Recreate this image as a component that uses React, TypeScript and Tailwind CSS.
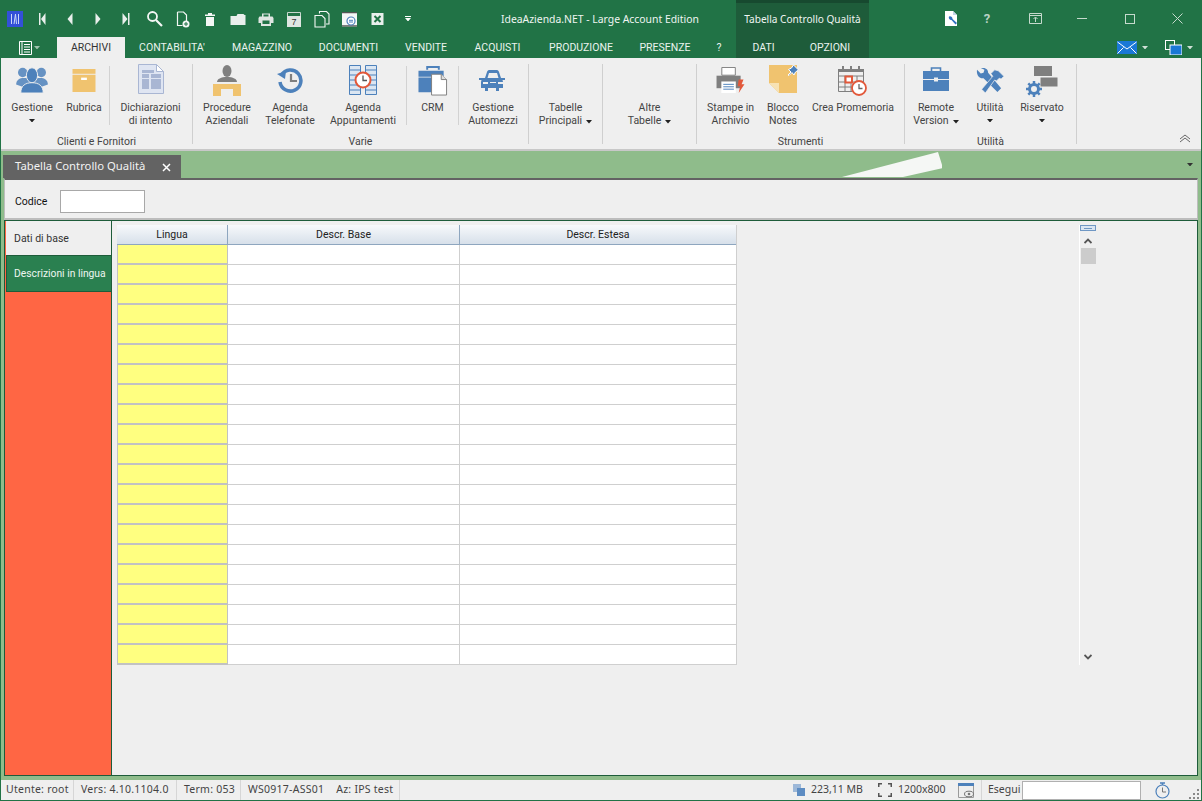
import type { ReactNode } from 'react'

const BLUE = '#4d81bb'
const TAN = '#f0c36f'
const GREY = '#7f7f7f'
const RED = '#e2583a'

function Caret({ color = '#222' }: { color?: string }) {
  return (
    <svg width="6" height="3.500" viewBox="0 0 7 4" className="inline-block">
      <path d="M0 0h7L3.500 4z" fill={color} />
    </svg>
  )
}

/* ---- title bar icons ---- */
const titleIcons: ReactNode[] = [
  <path key="a" d="M6 3h1.500v12H6zM12.500 3v12L8 9z" fill="#e9efec" />,
  <path key="b" d="M11.500 3v12L6.500 9z" fill="#e9efec" />,
  <path key="c" d="M6.500 3v12l5-6z" fill="#e9efec" />,
  <path key="d" d="M5.500 3v12l5-6zM11 3h1.500v12H11z" fill="#e9efec" />,
  <g key="e" fill="none" stroke="#f4f7f5">
    <circle cx="7.500" cy="6.500" r="4.500" strokeWidth="1.800" />
    <path d="M11 10l6 6" strokeWidth="2.200" />
  </g>,
  <g key="f">
    <path d="M4.500 2h6l3 3v6M4.500 2v13.500h5" fill="none" stroke="#f4f7f5" strokeWidth="1.200" />
    <circle cx="13" cy="14" r="3.500" fill="#f4f7f5" />
    <path d="M11 14h4M13 12v4" stroke="#217346" strokeWidth="1" />
  </g>,
  <path key="g" d="M4 4.500h10v1.500H4zM7 3h4v1.500H7zM5 7h8v9H5z" fill="#f4f7f5" />,
  <path key="h" d="M1.500 6h6l1-2h6l1 1h1v10H1.500z" fill="#e9efec" />,
  <g key="i">
    <path d="M5 3.500h8v3h2.500l1 1.500v5H14v3H4v-3H1.500V8l1-1.500H5z" fill="#dfe6e2" />
    <path d="M5.500 10.500h7v3.500h-7zM6.500 4.500h5v2h-5z" fill="#217346" />
  </g>,
  <g key="j">
    <path d="M2.500 2.500h13v14h-13z" fill="none" stroke="#c9d8cf" />
    <path d="M2 6h14v11H2z" fill="#dfe6e2" />
    <text x="9" y="15" fontSize="9" textAnchor="middle" fill="#333" fontFamily="Liberation Sans">7</text>
  </g>,
  <g key="k" fill="none" stroke="#f4f7f5" strokeWidth="1.100">
    <path d="M6.500 3.500V1.500h7l2.500 2.500v10h-3" />
    <path d="M2 5.500h7l3 3V17H2z" />
  </g>,
  <g key="l">
    <path d="M1 2h15v14.500H1z" fill="#f4f7f5" />
    <path d="M1 2h15v1.200H1zM1 15.300h15v1.200H1z" fill="#555" />
    <circle cx="10" cy="11" r="4" fill="#fff" stroke="#4d81bb" strokeWidth="1.200" />
    <path d="M8 10.300h4M8 12h4" stroke="#4d81bb" />
  </g>,
  <g key="m">
    <path d="M2.500 3h12v12h-12z" fill="#e9efec" />
    <path d="M5.500 6l6 6M11.500 6l-6 6" stroke="#217346" strokeWidth="2" />
  </g>,
]

function LogoIcon() {
  return (
    <svg width="16" height="16" viewBox="0 0 16 16">
      <rect width="16" height="16" fill="#3350d8" />
      <path d="M4.500 3v10M8.500 3L7 13M8.500 3l1 10M11.500 3v10" stroke="#cdd8f7" strokeWidth="1" fill="none" />
    </svg>
  )
}

function WindowIcons() {
  return (
    <div className="flex h-[37px] items-center">
      <div className="flex w-[36px] justify-center">
        <svg width="14" height="17" viewBox="0 0 14 17">
          <path d="M1 1h8l4 4v11H1z" fill="#fff" />
          <path d="M9 1v4h4" fill="#c4d3e8" />
          <path d="M5 6.500a2.500 2.500 0 0 0 2.500 3.500l4 4.500 1.500-1.500-4.500-4A2.500 2.500 0 0 0 5 6.500z" fill="#2f6fc0" />
        </svg>
      </div>
      <div className="flex w-[36px] justify-center text-[13px] font-bold text-[#b9d2c4]">?</div>
      <div className="ml-[12px] flex w-[36px] justify-center">
        <svg width="13" height="11" viewBox="0 0 13 11" fill="none" stroke="#c6dacd">
          <path d="M.500.500h12v10H.500zM.500 2.500h12M6.500 9V4.500M4.500 6l2-2 2 2" />
        </svg>
      </div>
      <div className="ml-[5px] flex w-[48px] justify-center">
        <div className="h-px w-[10px] bg-[#c6dacd]" />
      </div>
      <div className="flex w-[48px] justify-center">
        <div className="h-[10px] w-[10px] border border-[#c6dacd]" />
      </div>
      <div className="flex w-[47px] justify-center">
        <svg width="11" height="11" viewBox="0 0 11 11" stroke="#c6dacd">
          <path d="M.500.500l10 10M10.500.500l-10 10" />
        </svg>
      </div>
    </div>
  )
}

function Tab({ label, w, active }: { label: string; w: number; active?: boolean }) {
  return (
    <div
      className={`flex h-[21px] shrink-0 items-center justify-center whitespace-nowrap text-[10.500px] ${active ? 'bg-[#efefef] text-[#333]' : 'text-[#eaf3ee]'}`}
      style={{ width: w }}
    >
      {label}
    </div>
  )
}

/* ---- ribbon icons ---- */
function PeopleIcon() {
  return (
    <svg width="34" height="28" viewBox="0 0 34 30" className="mt-[7px]">
      <g fill={BLUE}>
        <circle cx="7" cy="8" r="5" opacity="0.85" />
        <circle cx="27" cy="8" r="5" opacity="0.85" />
        <path d="M0 21c0-5 4-7 8-7h18c4 0 8 2 8 7l-6 2H6z" opacity="0.85" />
        <ellipse cx="17" cy="11" rx="6" ry="8" stroke="#efefef" />
        <path d="M5 30c0-8 5-11 12-11s12 3 12 11z" stroke="#efefef" />
      </g>
    </svg>
  )
}

function BoxIcon() {
  return (
    <svg width="26" height="23" viewBox="0 0 26 24" className="mt-[11px]">
      <path d="M1 0h24v5H1z" fill={TAN} />
      <path d="M1 6h24v18H1z" fill={TAN} />
      <path d="M10 9h6v2.500h-6z" fill="#fff" />
    </svg>
  )
}

function DocIcon() {
  return (
    <svg width="26" height="30" viewBox="0 0 26 30" className="mt-[6px]">
      <path d="M.500.500h18l7 7v22H.500z" fill="#dfe5f2" stroke="#a9b6d3" />
      <path d="M18.500.500v7h7z" fill="#fff" stroke="#a9b6d3" />
      <path d="M4 6h12v3H4zM4 10h7v4H4zM13 10h10v4H13zM4 15h7v10H4zM13 15h10v10H13z" fill="#a9b6d3" />
    </svg>
  )
}

function DeskIcon() {
  return (
    <svg width="29" height="32" viewBox="0 0 29 32" className="mt-[6px]">
      <ellipse cx="14" cy="7" rx="4.500" ry="6" fill={GREY} />
      <path d="M4 18c0-3 4-5 10-5s10 2 10 5z" fill={GREY} />
      <path d="M0 20h28v12h-8v-7H8v7H0z" fill={TAN} />
    </svg>
  )
}

function HistoryIcon() {
  return (
    <svg width="26" height="26" viewBox="0 0 26 26" className="mt-[9px]">
      <path d="M4.500 8A10.500 10.500 0 1 1 3 15" fill="none" stroke={BLUE} strokeWidth="3.500" />
      <path d="M0 7l8 5 1-8z" fill={BLUE} />
      <path d="M14 7v7h6" fill="none" stroke={GREY} strokeWidth="2.200" />
    </svg>
  )
}

function ScheduleIcon() {
  return (
    <svg width="28" height="30" viewBox="0 0 28 30" className="mt-[7px]">
      <path d="M.500.500h11v29H.500zM16.500.500h11v29h-11z" fill="#dbe6f2" stroke={BLUE} />
      <path d="M1 5h10M1 10h10M1 15h10M1 20h10M1 25h10M17 5h10M17 10h10M17 15h10M17 20h10M17 25h10" stroke={BLUE} />
      <circle cx="14" cy="15" r="7.500" fill="#fff" stroke={RED} strokeWidth="2" />
      <path d="M14 10.500V15.500h4" fill="none" stroke="#555" strokeWidth="1.300" />
    </svg>
  )
}

function CaseDocIcon() {
  return (
    <svg width="30" height="30" viewBox="0 0 30 31" className="mt-[8px]">
      <path d="M9 4V1h12v3" fill="none" stroke={BLUE} strokeWidth="2" />
      <path d="M0 5h26v6H0zM0 12h26v15H0z" fill={BLUE} />
      <path d="M13.500 8.500h10l5.500 5.500v16H13.500z" fill="#fff" stroke={GREY} />
      <path d="M23.500 8.500V14H29" fill="#ddd" stroke={GREY} />
    </svg>
  )
}

function CarIcon() {
  return (
    <svg width="28" height="21" viewBox="0 0 28 21" className="mt-[12px]">
      <path d="M6 8l2-6c.300-1 1-2 2-2h8c1 0 1.700 1 2 2l2 6 4 0v2h-2.500l.500 2v6h-4v3h-3v-3H9v3H6v-3H2v-6l.500-2H0V8z" fill={BLUE} />
      <path d="M8.500 8l1.500-5h8l1.500 5z" fill="#efefef" />
      <path d="M4 12h5v2H4zM19 12h5v2h-5zM11 12h6v1h-6z" fill="#efefef" />
    </svg>
  )
}

function PrinterIcon() {
  return (
    <svg width="29" height="27" viewBox="0 0 29 28" className="mt-[9px]">
      <path d="M5.500.500h14v8h-14z" fill="#fff" stroke={GREY} />
      <path d="M0 9h25v13H0z" fill={GREY} />
      <path d="M5 15h15v12H5z" fill="#fff" />
      <path d="M7 18h11M7 20.500h11M7 23h11" stroke={BLUE} />
      <path d="M23 13h5l-2 5h3l-6 9 1.500-7H22z" fill={RED} />
    </svg>
  )
}

function NoteIcon() {
  return (
    <svg width="34" height="32" viewBox="0 0 34 32" className="mt-[4px]">
      <path d="M3 3h28v28H13L3 21z" fill={TAN} />
      <path d="M3 21h10v10z" fill="#f7e2b4" />
      <path d="M22 13l3-3-2.500-2.500 3-1.500 2-3 5 5-3 2-1.500 3L26 10.500l-3 3z" fill={BLUE} stroke="#fff" strokeWidth="1" />
    </svg>
  )
}

function CalendarIcon() {
  return (
    <svg width="30" height="30" viewBox="0 0 30 30" className="mt-[8px]">
      <path d="M.500 3.500h25v22h-25zM.500 10h25M.500 16h25M.500 21h25M7 10v16M13 10v16M19 10v16" fill="none" stroke={GREY} />
      <path d="M0 3h26v3H0zM4 0h2v4H4zM12 0h2v4h-2zM20 0h2v4h-2z" fill={GREY} />
      <path d="M7.500 10.500h6.500v6H7.500z" fill="#fff" stroke={RED} strokeWidth="2" />
      <circle cx="21" cy="22" r="7" fill="#fff" stroke={RED} strokeWidth="1.800" />
      <path d="M21 18v4.500h3.500" fill="none" stroke="#666" strokeWidth="1.300" />
    </svg>
  )
}

function BriefcaseIcon() {
  return (
    <svg width="26" height="24" viewBox="0 0 26 24" className="mt-[9px]">
      <path d="M8.500 4V1h9v3" fill="none" stroke={BLUE} strokeWidth="1.600" />
      <path d="M0 4h26v8H15v-1.500h-4V12H0zM0 13h11v1.500h4V13h11v11H0z" fill={BLUE} />
    </svg>
  )
}

function ToolsIcon() {
  return (
    <svg width="30" height="25" viewBox="0 0 30 27" className="mt-[10px]">
      <path d="M1 2l4 4 3-1 1-3-4-2c4-1 8 1 8 5l14 17-4 4L8 11C4 12 0 8 1 2z" fill={BLUE} />
      <path d="M6 23L18 9l-2-3 4-4 4 1 6 6-3 3-2-1-3 3-2-1L10 27z" fill={BLUE} stroke="#efefef" strokeWidth="0.800" />
    </svg>
  )
}

function ReservedIcon() {
  return (
    <svg width="32" height="31" viewBox="0 0 32 31" className="mt-[8px]">
      <path d="M8 0h18v10H8z" fill={GREY} />
      <path d="M14 11h18v10H14z" fill={GREY} stroke="#efefef" />
      <g transform="translate(8 23)">
        <circle r="4.500" fill="none" stroke={BLUE} strokeWidth="3" />
        <path d="M0-8v3M0 5v3M-8 0h3M5 0h3M-5.700-5.700l2 2M3.700 3.700l2 2M5.700-5.700l-2 2M-3.700 3.700l-2 2" stroke={BLUE} strokeWidth="2.500" />
      </g>
    </svg>
  )
}

/* ---- ribbon parts ---- */
function RibbonButton({ w, icon, lines, caret }: { w: number; icon?: ReactNode; lines: string[]; caret?: 'below' | 'inline' }) {
  return (
    <div className="flex flex-col items-center text-[10.500px] leading-[13px] text-[#444]" style={{ width: w }}>
      <div className="flex h-[43px] items-start justify-center">{icon}</div>
      {lines.map((line, i) => (
        <div key={line} className="whitespace-nowrap">
          {line}
          {caret === 'inline' && i === lines.length - 1 && (
            <span className="ml-[4px] align-middle">
              <Caret />
            </span>
          )}
        </div>
      ))}
      {caret === 'below' && (
        <div className="flex h-[13px] items-center">
          <Caret />
        </div>
      )}
    </div>
  )
}

function SmallSep() {
  return <div className="mt-[8px] h-[59px] w-px shrink-0 bg-[#d2d2d2]" />
}

function Group({ w, label, children }: { w: number; label?: string; children: ReactNode }) {
  return (
    <div className="flex h-[90px] shrink-0 flex-col" style={{ width: w }}>
      <div className="flex h-[77px] shrink-0">{children}</div>
      <div className="h-[13px] text-center text-[10.500px] leading-[14px] text-[#444]">{label}</div>
    </div>
  )
}

function GroupSep() {
  return <div className="mt-[6px] h-[80px] w-px shrink-0 bg-[#cfcfcf]" />
}

function StatusCell({ children, w }: { children: ReactNode; w: number }) {
  return (
    <div className="flex h-full items-center whitespace-nowrap border-r border-[#d6d6d6] tracking-[0.25px]" style={{ width: w }}>
      {children}
    </div>
  )
}

const rows = Array.from({ length: 21 }, (_, i) => i)

export default function App() {
  return (
    <div className="flex h-[801px] w-[1202px] flex-col overflow-hidden bg-[#217346] px-px pb-px font-['Roboto',sans-serif]">
      {/* title bar + ribbon tabs */}
      <div className="flex h-[58px] shrink-0">
        <div className="flex w-[735px] shrink-0 flex-col">
          <div className="flex h-[37px] items-center">
            <div className="flex w-[27px] shrink-0 justify-center">
              <LogoIcon />
            </div>
            {titleIcons.map((icon, i) => (
              <div key={i} className="flex w-[28px] shrink-0 justify-center">
                <svg width="18" height="18" viewBox="0 0 18 18">
                  {icon}
                </svg>
              </div>
            ))}
            <div className="ml-[12px] flex w-[8px] flex-col items-center gap-[1px]">
              <div className="h-px w-[6px] bg-white" />
              <Caret color="#fff" />
            </div>
            <div className="ml-[89px] mt-[2px] whitespace-nowrap font-['Noto_Sans',sans-serif] text-[10.400px] text-[#f0f5f2]">IdeaAzienda.NET - Large Account Edition</div>
          </div>
          <div className="flex h-[21px]">
            <div className="flex w-[56px] shrink-0 items-center pl-[18px]">
              <svg width="13" height="14" viewBox="0 0 13 14" fill="none" stroke="#fff">
                <path d="M.500.500h12v13H.500zM3 1v12" />
                <path d="M5 3.500h6M5 6h6M5 8.500h6M5 11h6" />
              </svg>
              <span className="ml-[2px] flex">
                <Caret color="#9fc2ae" />
              </span>
            </div>
            <Tab w={68} label="ARCHIVI" active />
            <Tab w={94} label="CONTABILITA'" />
            <Tab w={86} label="MAGAZZINO" />
            <Tab w={87} label="DOCUMENTI" />
            <Tab w={68} label="VENDITE" />
            <Tab w={75} label="ACQUISTI" />
            <Tab w={92} label="PRODUZIONE" />
            <Tab w={76} label="PRESENZE" />
            <Tab w={32} label="?" />
          </div>
        </div>
        <div className="flex w-[133px] shrink-0 flex-col border-t-[3px] border-[#17492f] bg-[#1e5c3a]">
          <div className="flex h-[34px] items-center justify-center whitespace-nowrap font-['Noto_Sans',sans-serif] text-[10.100px] text-[#f0f5f2]">Tabella Controllo Qualità</div>
          <div className="flex h-[21px]">
            <Tab w={55} label="DATI" />
            <Tab w={78} label="OPZIONI" />
          </div>
        </div>
        <div className="flex min-w-0 flex-1 flex-col">
          <div className="pl-[64px]">
            <WindowIcons />
          </div>
          <div className="flex h-[21px] items-center justify-end gap-[17px] pr-[8px]">
            <div className="flex items-center gap-[5px]">
              <svg width="20" height="13" viewBox="0 0 20 13">
                <rect width="20" height="13" fill="#1a78d6" />
                <path d="M.500 1L10 8l9.500-7M.500 12.500l6-6M19.500 12.500l-6-6" fill="none" stroke="#fff" />
              </svg>
              <Caret color="#cfe0d6" />
            </div>
            <div className="flex items-center gap-[5px]">
              <svg width="17" height="15" viewBox="0 0 17 15">
                <rect x="0.500" y="0.500" width="9" height="9" fill="#217346" stroke="#fff" />
                <rect x="5" y="5" width="12" height="10" fill="#1a78d6" stroke="#fff" />
              </svg>
              <Caret color="#cfe0d6" />
            </div>
          </div>
        </div>
      </div>

      {/* ribbon */}
      <div className="flex h-[93px] shrink-0 border-b-[2px] border-[#c8c8c8] bg-[#efefef]">
        <Group w={191} label="Clienti e Fornitori">
          <div className="w-[4px]" />
          <RibbonButton w={54} icon={<PeopleIcon />} lines={['Gestione']} caret="below" />
          <RibbonButton w={50} icon={<BoxIcon />} lines={['Rubrica']} />
          <SmallSep />
          <RibbonButton w={81} icon={<DocIcon />} lines={['Dichiarazioni', 'di intento']} />
        </Group>
        <GroupSep />
        <Group w={335} label="Varie">
          <div className="w-[4px]" />
          <RibbonButton w={60} icon={<DeskIcon />} lines={['Procedure', 'Aziendali']} />
          <RibbonButton w={66} icon={<HistoryIcon />} lines={['Agenda', 'Telefonate']} />
          <RibbonButton w={80} icon={<ScheduleIcon />} lines={['Agenda', 'Appuntamenti']} />
          <div className="w-[3px]" />
          <SmallSep />
          <RibbonButton w={51} icon={<CaseDocIcon />} lines={['CRM']} />
          <SmallSep />
          <RibbonButton w={68} icon={<CarIcon />} lines={['Gestione', 'Automezzi']} />
        </Group>
        <GroupSep />
        <Group w={73}>
          <RibbonButton w={73} lines={['Tabelle', 'Principali']} caret="inline" />
        </Group>
        <GroupSep />
        <Group w={93}>
          <RibbonButton w={93} lines={['Altre', 'Tabelle']} caret="inline" />
        </Group>
        <GroupSep />
        <Group w={207} label="Strumenti">
          <RibbonButton w={67} icon={<PrinterIcon />} lines={['Stampe in', 'Archivio']} />
          <RibbonButton w={38} icon={<NoteIcon />} lines={['Blocco', 'Notes']} />
          <RibbonButton w={102} icon={<CalendarIcon />} lines={['Crea Promemoria']} />
        </Group>
        <GroupSep />
        <Group w={171} label="Utilità">
          <RibbonButton w={62} icon={<BriefcaseIcon />} lines={['Remote', 'Version']} caret="inline" />
          <RibbonButton w={46} icon={<ToolsIcon />} lines={['Utilità']} caret="below" />
          <RibbonButton w={58} icon={<ReservedIcon />} lines={['Riservato']} caret="below" />
        </Group>
        <GroupSep />
        <div className="flex flex-1 items-end justify-end pb-[6px] pr-[10px]">
          <svg width="12" height="9" viewBox="0 0 12 9" fill="none" stroke="#666">
            <path d="M1 5l5-4 5 4M1 8l5-4 5 4" />
          </svg>
        </div>
      </div>

      {/* document tab strip */}
      <div className="relative flex h-[27px] shrink-0 items-end bg-[#8fbc8b] pl-[2px]">
        <div className="flex h-[23px] w-[178px] items-center bg-[#636363] pl-[12px] font-['Noto_Sans',sans-serif] text-[11.300px] text-[#f2f2f2]">
          <span className="whitespace-nowrap">Tabella Controllo Qualità</span>
          <svg width="9" height="9" viewBox="0 0 9 9" className="ml-[17px] mt-px" stroke="#fff" strokeWidth="1.500">
            <path d="M1 1l7 7M8 1L1 8" />
          </svg>
        </div>
        <svg width="100" height="26" viewBox="0 0 100 26" className="absolute left-[841px] top-0">
          <path d="M0 26L96 1l5 16-40 9z" fill="#f5f7f5" />
        </svg>
        <div className="ml-auto flex h-full items-center pr-[8px]">
          <Caret color="#333" />
        </div>
      </div>

      {/* form panel */}
      <div className="flex min-h-0 flex-1 flex-col bg-[#8fbc8b] px-[3px]">
        <div className="flex h-[42px] shrink-0 items-center border-x border-b-2 border-t-2 border-[#bdbdbd] border-t-[#636363] bg-[#efefef] pl-[10px] pt-[5px]">
          <span className="w-[45px] text-[10.500px] text-[#111]">Codice</span>
          <div className="h-[23px] w-[85px] border border-[#a8a8a8] bg-white" />
        </div>
        <div className="flex min-h-0 flex-1 border border-[#1e5c3a] bg-[#efefef]">
          <div className="flex w-[107px] shrink-0 flex-col border-r border-[#1e5c3a] bg-[#ff6644] pl-px">
            <div className="flex h-[34px] items-center bg-[#efefef] pl-[8px] pt-[2px] text-[10.500px] text-[#333]">Dati di base</div>
            <div className="flex h-[37px] items-center whitespace-nowrap border border-r-0 border-[#1e5c3a] bg-[#2a8050] pl-[7px] pt-px text-[10.300px] text-[#eef6f1]">
              Descrizioni in lingua
            </div>
          </div>
          <div className="flex flex-1 items-start justify-between pl-[5px] pr-[101px] pt-[4px]">
            <div className="grid grid-cols-[111px_232px_276px] border-r border-[#cfcfcf] text-[10.500px] text-[#222]">
              <div className="flex h-[20px] items-center justify-center border-b border-r border-[#8ea6bf] bg-linear-to-b from-[#f7f9fb] to-[#d7e0ea]">Lingua</div>
              <div className="flex h-[20px] items-center justify-center border-b border-r border-[#8ea6bf] bg-linear-to-b from-[#f7f9fb] to-[#d7e0ea]">Descr. Base</div>
              <div className="flex h-[20px] items-center justify-center border-b border-[#8ea6bf] bg-linear-to-b from-[#f7f9fb] to-[#d7e0ea]">Descr. Estesa</div>
              {rows.map((r) => (
                <div key={r} className="contents">
                  <div className="h-[20px] border-x border-b-2 border-[#c2c2c2] bg-[#ffff80]" />
                  <div className="h-[20px] border-b border-r border-[#cfcfcf] bg-white" />
                  <div className="h-[20px] border-b border-[#cfcfcf] bg-white" />
                </div>
              ))}
            </div>
            <div className="flex h-[440px] w-[17px] flex-col items-center border-l border-white">
              <div className="flex h-[6px] w-[16px] items-center justify-center border border-[#6f97c4] bg-[#d9e5f2]">
                <div className="h-px w-[8px] bg-[#6f97c4]" />
              </div>
              <svg width="8" height="6" viewBox="0 0 8 6" className="mt-[7px]" fill="none" stroke="#555" strokeWidth="1.800">
                <path d="M.500 5L4 1.500 7.500 5" />
              </svg>
              <div className="mt-[4px] h-[16px] w-[15px] bg-[#cccccc]" />
              <svg width="8" height="6" viewBox="0 0 8 6" className="mb-[5px] mt-auto" fill="none" stroke="#555" strokeWidth="1.800">
                <path d="M.500 1L4 4.500 7.500 1" />
              </svg>
            </div>
          </div>
        </div>
        <div className="h-[4px] shrink-0" />
      </div>

      {/* status bar */}
      <div className="flex h-[20px] shrink-0 items-center bg-[#efefef] font-['Noto_Sans',sans-serif] text-[10.500px] text-[#444]">
        <StatusCell w={73}>
          <span className="pl-[5px]">Utente: root</span>
        </StatusCell>
        <StatusCell w={103}>
          <span className="pl-[7px]">Vers: 4.10.1104.0</span>
        </StatusCell>
        <StatusCell w={64}>
          <span className="pl-[7px]">Term: 053</span>
        </StatusCell>
        <StatusCell w={159}>
          <span className="pl-[7px]">WS0917-ASS01</span>
          <span className="pl-[12px]">Az: IPS test</span>
        </StatusCell>
        <div className="ml-auto flex h-full items-center">
          <svg width="12" height="12" viewBox="0 0 12 12">
            <path d="M0 0h8v8H0z" fill="#9db8d8" />
            <path d="M4 4h8v8H4z" fill="#5d8cc2" />
          </svg>
          <span className="ml-[6px] w-[67px] whitespace-nowrap">223,11 MB</span>
          <svg width="14" height="14" viewBox="0 0 14 14" fill="none" stroke="#555" strokeWidth="1.500">
            <path d="M.750 4V.750H4M10 .750h3.250V4M13.250 10v3.250H10M4 13.250H.750V10" />
          </svg>
          <span className="ml-[6px] w-[60px] whitespace-nowrap">1200x800</span>
          <svg width="16" height="15" viewBox="0 0 16 15">
            <path d="M.500.500h15v14H.500z" fill="none" stroke="#9a9a9a" />
            <path d="M0 0h16v3H0z" fill={BLUE} />
            <ellipse cx="11" cy="11" rx="4.500" ry="2.800" fill="#efefef" stroke="#777" />
            <circle cx="11" cy="11" r="1.300" fill="#777" />
          </svg>
          <div className="ml-[7px] h-full w-px bg-[#d6d6d6]" />
          <span className="ml-[6px] w-[34px]">Esegui</span>
          <div className="h-[19px] w-[119px] border border-[#b0b0b0] bg-white" />
          <svg width="15" height="17" viewBox="0 0 15 17" className="ml-[14px]" fill="none" stroke={BLUE}>
            <circle cx="7.500" cy="9.500" r="6.500" strokeWidth="1.200" />
            <path d="M5 1h5M7.500 1v2" strokeWidth="1.500" />
            <path d="M7.500 5.500v4.500h3.500" stroke="#777" />
          </svg>
          <svg width="11" height="10" viewBox="0 0 11 10" className="ml-[19px] mr-px mt-[8px]" fill="#888">
            <path d="M8 0h2v2H8zM4 4h2v2H4zM8 4h2v2H8zM0 8h2v2H0zM4 8h2v2H4zM8 8h2v2H8z" />
          </svg>
        </div>
      </div>
    </div>
  )
}
